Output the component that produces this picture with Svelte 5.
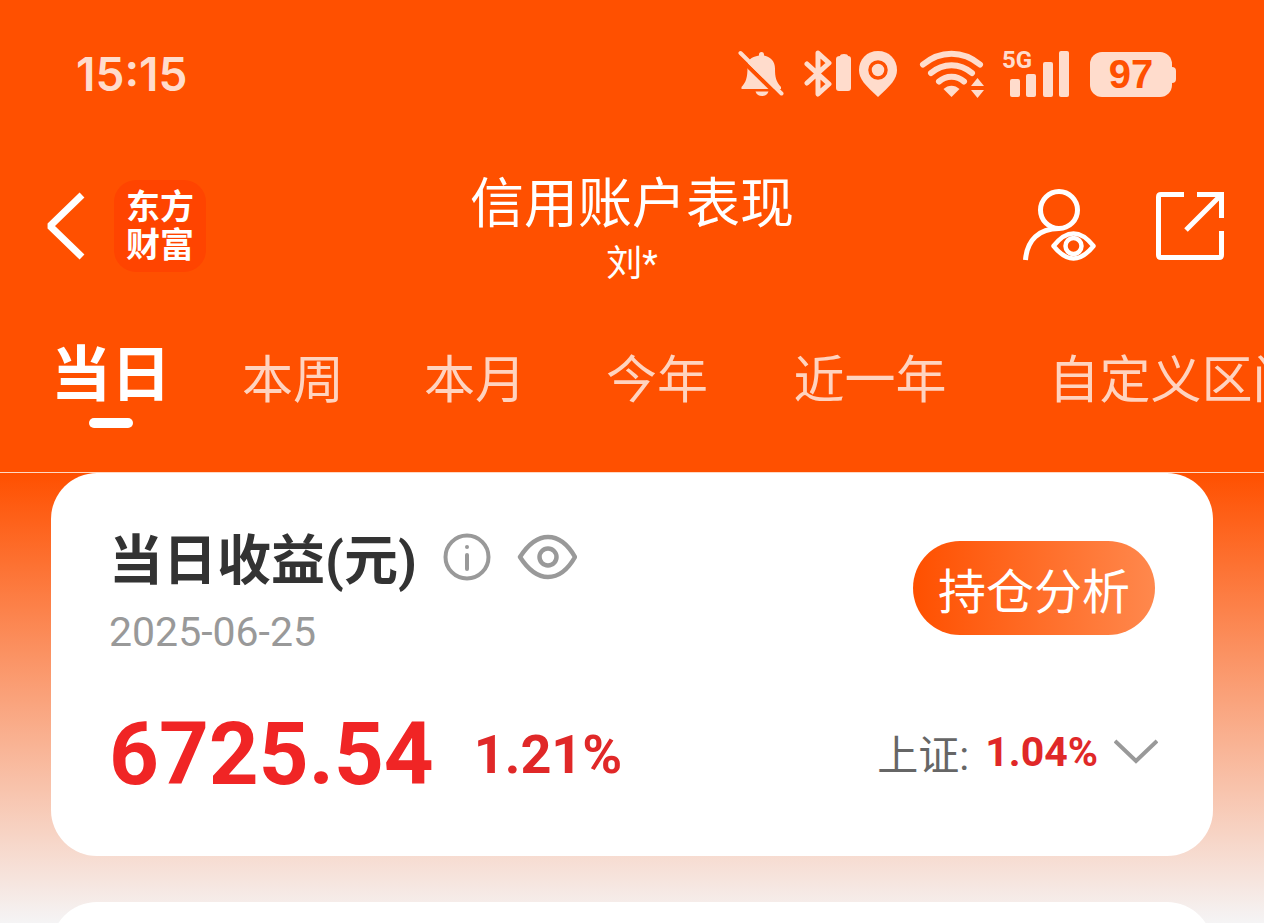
<script>
  const tabs = ['当日', '本周', '本月', '今年', '近一年', '自定义区间'];

  let active = '当日';
  let hidden = false;

  // 标签宽度随字数变化
  const tabWidth = (label) => 58 + label.length * 62;
</script>

<div class="page">
  <header class="top">
    <div class="status">
      <span class="clock">15:15</span>
      <div class="status-icons">
        <svg class="bell" width="48" height="48" viewBox="0 0 48 48" fill="currentColor">
          <path d="M21 4.500a2.500 2.500 0 0 1 5 0v1c7 1.500 11 6 11 13 0 9 1 13 6 18.500v2H3.500v-2c4.500-5 6-9 6-20 0-7 3-10 11.500-11.500z" />
          <path d="M17.500 41.500h13c-1 3-3.500 4.500-6.500 4.500s-5.500-1.500-6.500-4.500z" />
          <path d="M-1 5.500 42 47.500" stroke="#ff5000" stroke-width="4" />
          <path d="M2.500 3 43.500 43.500" stroke="currentColor" stroke-width="4" stroke-linecap="round" />
        </svg>
        <svg class="bluetooth" width="48" height="48" viewBox="0 0 48 48">
          <path d="m3 14 22 20-11 10V3l11 10L3 33" fill="none" stroke="currentColor" stroke-width="5" stroke-linejoin="round" stroke-linecap="round" />
          <path d="M32 9q0-3 4-3 0-2 4-2t4 2q3 0 3 3v29q0 3-3 3h-9q-3 0-3-3z" fill="currentColor" />
        </svg>
        <svg class="pin" width="40" height="48" viewBox="0 0 40 48">
          <path d="M20 1C9 1 1 9 1 20c0 9 6 15 19 27 13-12 19-18 19-27C39 9 31 1 20 1z" fill="currentColor" />
          <circle cx="20" cy="20" r="8" fill="none" stroke="#ff5000" stroke-width="3.500" />
        </svg>
        <svg class="wifi" width="68" height="48" viewBox="0 0 68 48" fill="none" stroke="currentColor" stroke-width="6" stroke-linecap="round">
          <path d="M4 14.500c17-14.500 40-14.500 57 0M12 23c12-10.500 29-10.500 41 0M20 31.500c7-6.500 18-6.500 25 0" />
          <path d="M24.500 39c4.500-4.500 11.500-4.500 16 0l-8 8z" fill="currentColor" stroke="none" />
          <path d="m52 36 6.500-8 6.500 8zm0 4h13l-6.500 8z" fill="currentColor" stroke="none" />
        </svg>
        <div class="signal">
          <span class="net">5G</span>
          <svg width="60" height="48" viewBox="0 0 60 48" fill="currentColor">
            <rect x="0" y="29" width="10" height="18" rx="2" />
            <rect x="16" y="24" width="10" height="23" rx="2" />
            <rect x="33" y="12" width="10" height="35" rx="2" />
            <rect x="49" y="1" width="10" height="46" rx="2" />
          </svg>
        </div>
        <div class="battery">97</div>
      </div>
    </div>

    <div class="nav">
      <div class="nav-side">
        <button class="icon-button" aria-label="返回">
          <svg width="40" height="68" viewBox="0 0 40 68" fill="none" stroke="#fff" stroke-width="7" stroke-linejoin="bevel">
            <path d="M36 3 4 34 36 65" />
          </svg>
        </button>
        <a class="logo" href="#home"><span>东方</span><span>财富</span></a>
      </div>
      <div class="heading">
        <h1>信用账户表现</h1>
        <p>刘*</p>
      </div>
      <div class="nav-side right">
        <button class="icon-button" aria-label="账户查看">
          <svg width="74" height="74" viewBox="0 0 74 74" fill="none" stroke="#fff" stroke-width="5">
            <circle cx="37" cy="21" r="18.500" />
            <path d="M3.500 71C5 51 17 39.500 37 39.500" />
            <path d="M31.500 57q20-25 40 0-20 25-40 0z" stroke-width="4.500" stroke-linejoin="round" />
            <circle cx="51.500" cy="57" r="8" stroke-width="4.500" />
          </svg>
        </button>
        <button class="icon-button" aria-label="分享">
          <svg width="68" height="68" viewBox="0 0 68 68" fill="none" stroke="#fff" stroke-width="5">
            <path d="M28 2.500H5q-2.500 0-2.500 2.500v58q0 2.500 2.500 2.500h58q2.500 0 2.500-2.500V39M41 2.500h24.500V26M65 3 30 38" />
          </svg>
        </button>
      </div>
    </div>

    <nav class="tabs">
      {#each tabs as tab}
        <button
          class="tab"
          class:active={active === tab}
          style="width: {tabWidth(tab)}px"
          on:click={() => (active = tab)}
        >{tab}</button>
      {/each}
    </nav>
  </header>

  <main class="content">
    <section class="card">
      <div class="row summary">
        <div>
          <div class="title-row">
            <h2>当日收益(元)</h2>
            <button class="icon-button" aria-label="说明">
              <svg width="48" height="48" viewBox="0 0 48 48" fill="none" stroke="#999" stroke-width="4" stroke-linecap="round">
                <circle cx="24" cy="24" r="21.500" />
                <path d="M24 22v14" />
                <circle cx="24" cy="14" r="2" fill="#999" stroke="none" />
              </svg>
            </button>
            <button class="icon-button" aria-label="显示或隐藏金额" on:click={() => (hidden = !hidden)}>
              <svg width="60" height="48" viewBox="0 0 60 48" fill="none" stroke="#999" stroke-width="4.500">
                <path d="M3 24C12 10 21 4 31 4s19 6 27 20C50 38 41 44 31 44S12 38 3 24z" stroke-linejoin="round" />
                <circle cx="31" cy="24" r="8.500" />
              </svg>
            </button>
          </div>
          <time datetime="2025-06-25">2025-06-25</time>
        </div>
        <button class="analysis">持仓分析</button>
      </div>

      <div class="row figures">
        <div class="profit">
          <strong class="amount">{hidden ? '****' : '6725.54'}</strong>
          <strong class="rate">1.21%</strong>
        </div>
        <button class="index">
          <span>上证:</span>
          <strong>1.04%</strong>
          <svg width="44" height="28" viewBox="0 0 44 28" fill="none" stroke="#999" stroke-width="4">
            <path d="m1 3 21 20L43 3" />
          </svg>
        </button>
      </div>
    </section>

    <section class="card next"></section>
  </main>
</div>

<style>
  :global(body) {
    margin: 0;
  }

  .page {
    display: flex;
    flex-direction: column;
    height: 100vh;
    overflow: hidden;
    font-family: Roboto, "Noto Sans CJK SC", sans-serif;
    color: #333;
  }

  button {
    padding: 0;
    border: none;
    background: none;
    font: inherit;
    color: inherit;
    cursor: pointer;
  }

  h1,
  h2,
  p {
    margin: 0;
  }

  svg {
    display: block;
  }

  .icon-button {
    flex: none;
  }

  .top {
    flex: none;
    background: #ff5000;
    border-bottom: 1px solid #ffd9c4;
    color: #fff;
  }

  /* 状态栏 */
  .status {
    display: flex;
    justify-content: space-between;
    align-items: center;
    height: 148px;
    padding: 0 88px 0 76px;
    color: #ffdccc;
  }

  .clock {
    font: 600 46px/56px Inter, sans-serif;
  }

  .status-icons {
    display: flex;
    align-items: center;
  }

  .bluetooth {
    margin-left: 18px;
  }

  .pin {
    margin-left: 6px;
  }

  .wifi {
    margin: 0 23px 0 21px;
  }

  .signal {
    position: relative;
    margin-right: 20px;
  }

  .net {
    position: absolute;
    top: -2px;
    left: -8px;
    font: 700 24px/24px Roboto, sans-serif;
  }

  .battery {
    position: relative;
    width: 82px;
    margin-right: 4px;
    border-radius: 12px;
    background: #ffdccc;
    color: #ff5000;
    font: 700 40px/45px "Liberation Sans", sans-serif;
    text-align: center;
  }

  .battery::after {
    content: '';
    position: absolute;
    top: 15px;
    right: -4px;
    width: 4px;
    height: 16px;
    border-radius: 0 4px 4px 0;
    background: #ffdccc;
  }

  /* 导航 */
  .nav {
    display: flex;
    align-items: center;
    height: 156px;
    padding: 0 40px 0 46px;
  }

  .nav-side {
    display: flex;
    align-items: center;
    width: 208px;
    gap: 28px;
  }

  .nav-side.right {
    justify-content: flex-end;
    gap: 60px;
  }

  .logo {
    display: flex;
    flex-direction: column;
    align-items: center;
    justify-content: center;
    width: 92px;
    height: 92px;
    border-radius: 22px;
    background: #ff4400;
    color: #fff;
    font-size: 34px;
    font-weight: 700;
    line-height: 38px;
    text-decoration: none;
  }

  .heading {
    flex: 1;
    padding: 14px 6px 0 0;
    text-align: center;
  }

  h1 {
    font-size: 54px;
    font-weight: 400;
    line-height: 62px;
  }

  .heading p {
    font-size: 36px;
    line-height: 56px;
  }

  /* 时间区间 */
  .tabs {
    display: flex;
    height: 168px;
    padding-left: 20px;
    overflow: hidden;
  }

  .tab {
    position: relative;
    flex: none;
    height: 144px;
    font-size: 51px;
    color: #ffd3bf;
    white-space: nowrap;
  }

  .tab.active {
    height: 130px;
    font-size: 60px;
    font-weight: 700;
    color: #fff;
  }

  .tab.active::after {
    content: '';
    position: absolute;
    top: 114px;
    left: 50%;
    width: 44px;
    height: 10px;
    margin-left: -22px;
    border-radius: 5px;
    background: #fff;
  }

  .content {
    display: flex;
    flex: 1;
    flex-direction: column;
    gap: 46px;
    min-height: 0;
    padding: 0 51px;
    background: linear-gradient(#ff5000, #f5f4f5);
  }

  .card {
    flex: none;
    padding: 48px 58px;
    border-radius: 46px;
    background: #fff;
  }

  .card.next {
    min-height: 120px;
  }

  .row {
    display: flex;
    align-items: center;
    justify-content: space-between;
  }

  .row.summary {
    align-items: flex-start;
  }

  .title-row {
    display: flex;
    align-items: flex-start;
    gap: 26px;
  }

  .title-row .icon-button {
    margin-top: 12px;
  }

  h2 {
    font-size: 54px;
    font-weight: 700;
    line-height: 82px;
  }

  time {
    display: block;
    color: #999;
    font-size: 41px;
    line-height: 58px;
  }

  .analysis {
    width: 242px;
    height: 94px;
    margin-top: 20px;
    border-radius: 47px;
    background: linear-gradient(90deg, #ff5000, #ff884d);
    color: #fff;
    font-size: 48px;
  }

  .figures {
    margin-top: 39px;
  }

  .profit {
    display: flex;
    align-items: center;
    gap: 40px;
    color: #f02525;
  }

  .amount {
    font-size: 87px;
    line-height: 108px;
  }

  .rate {
    color: #e02828;
    font-size: 54px;
  }

  .index {
    display: flex;
    align-items: center;
    gap: 16px;
    margin: 0 -3px 4px 0;
    color: #666;
    font-size: 41px;
  }

  .index strong {
    color: #e02828;
  }
</style>
